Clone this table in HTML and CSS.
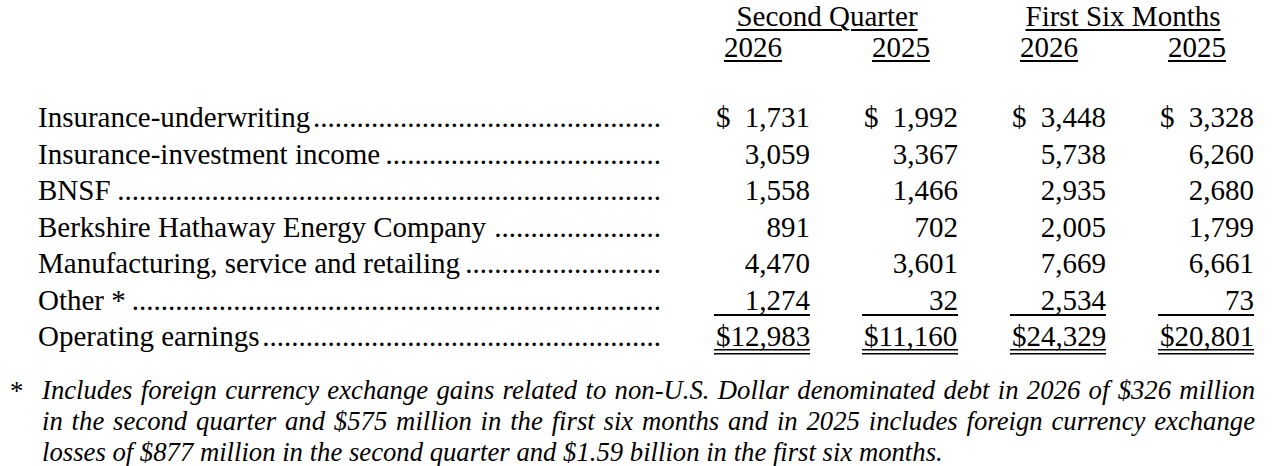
FILE: index.html
```html
<!DOCTYPE html>
<html>
<head>
<meta charset="utf-8">
<link rel="stylesheet" href="styles.css">
</head>
<body>
<div class="page">
  <div class="head">
    <div class="group g1"><span class="ul">Second Quarter</span></div>
    <div class="group g2"><span class="ul">First Six Months</span></div>
    <div class="spacer"></div>
    <div class="year"><span class="ul">2026</span></div>
    <div class="year"><span class="ul">2025</span></div>
    <div class="year"><span class="ul">2026</span></div>
    <div class="year"><span class="ul">2025</span></div>
  </div>
  <div class="table">
    <div class="label"><span class="name">Insurance-underwriting</span><span class="dots">................................................</span></div>
    <div class="cell"><span class="amt"><span>$</span><span>1,731</span></span></div>
    <div class="cell"><span class="amt"><span>$</span><span>1,992</span></span></div>
    <div class="cell"><span class="amt"><span>$</span><span>3,448</span></span></div>
    <div class="cell"><span class="amt"><span>$</span><span>3,328</span></span></div>

    <div class="label"><span class="name">Insurance-investment income</span><span class="dots">......................................</span></div>
    <div class="cell"><span class="amt">3,059</span></div>
    <div class="cell"><span class="amt">3,367</span></div>
    <div class="cell"><span class="amt">5,738</span></div>
    <div class="cell"><span class="amt">6,260</span></div>

    <div class="label"><span class="name">BNSF</span><span class="dots">...........................................................................</span></div>
    <div class="cell"><span class="amt">1,558</span></div>
    <div class="cell"><span class="amt">1,466</span></div>
    <div class="cell"><span class="amt">2,935</span></div>
    <div class="cell"><span class="amt">2,680</span></div>

    <div class="label"><span class="name">Berkshire Hathaway Energy Company</span><span class="dots">.......................</span></div>
    <div class="cell"><span class="amt">891</span></div>
    <div class="cell"><span class="amt">702</span></div>
    <div class="cell"><span class="amt">2,005</span></div>
    <div class="cell"><span class="amt">1,799</span></div>

    <div class="label"><span class="name">Manufacturing, service and retailing</span><span class="dots">...........................</span></div>
    <div class="cell"><span class="amt">4,470</span></div>
    <div class="cell"><span class="amt">3,601</span></div>
    <div class="cell"><span class="amt">7,669</span></div>
    <div class="cell"><span class="amt">6,661</span></div>

    <div class="label"><span class="name">Other *</span><span class="dots">.........................................................................</span></div>
    <div class="cell"><span class="amt single">1,274</span></div>
    <div class="cell"><span class="amt single">32</span></div>
    <div class="cell"><span class="amt single">2,534</span></div>
    <div class="cell"><span class="amt single">73</span></div>

    <div class="label"><span class="name">Operating earnings</span><span class="dots">.......................................................</span></div>
    <div class="cell"><span class="amt double"><span>$12,983</span></span></div>
    <div class="cell"><span class="amt double"><span>$11,160</span></span></div>
    <div class="cell"><span class="amt double"><span>$24,329</span></span></div>
    <div class="cell"><span class="amt double"><span>$20,801</span></span></div>
  </div>
  <div class="note">
    <span class="star">*</span>
    <p class="note-text"><span class="ln just">Includes foreign currency exchange gains related to non-U.S. Dollar denominated debt in 2026 of $326 million</span> <span class="ln just">in the second quarter and $575 million in the first six months and in 2025 includes foreign currency exchange</span> <span class="ln">losses of $877 million in the second quarter and $1.59 billion in the first six months.</span></p>
  </div>
</div>
</body>
</html>
```
FILE: styles.css
```css
html, body {
  margin: 0;
  padding: 0;
  background: #ffffff;
}
body {
  font-family: "Liberation Serif", "Times New Roman", serif;
  color: #000000;
  font-size: 29px;
}
.page {
  width: 1282px;
  height: 466px;
  overflow: hidden;
}
.head {
  display: grid;
  grid-template-columns: 662px repeat(4, 148px);
  padding-top: 1px;
  line-height: 31px;
}
.group {
  text-align: center;
  padding: 0 28px 0 62px;
}
.g1 { grid-column: 2 / 4; }
.g2 { grid-column: 4 / 6; }
.spacer { grid-column: 1; }
.year {
  text-align: right;
  padding-right: 28px;
}
.ul {
  text-decoration: underline;
  text-decoration-thickness: 2px;
  text-underline-offset: 3px;
}
.table {
  display: grid;
  grid-template-columns: 662px repeat(4, 148px);
  line-height: 36.5px;
  margin-top: 36px;
}
.label {
  display: flex;
  justify-content: space-between;
  padding-left: 38px;
  padding-right: 1px;
  white-space: nowrap;
}
.name,
.dots {
  flex: none;
}
.cell {
  display: flex;
  justify-content: flex-end;
}
.amt {
  width: 96px;
  display: flex;
  justify-content: space-between;
  padding-left: 2px;
  box-sizing: border-box;
}
.amt:not(:has(span)) {
  justify-content: flex-end;
}
.single {
  background: linear-gradient(#000, #000) no-repeat;
  background-size: 100% 2px;
  background-position: 0 32px;
}
.double {
  background:
    linear-gradient(#000, #000) no-repeat,
    linear-gradient(#000, #000) no-repeat;
  background-size: 100% 1.5px, 100% 1.5px;
  background-position: 0 31px, 0 35px;
}
.note {
  display: flex;
  margin-top: 20px;
  font-size: 26.7px;
  line-height: 31px;
}
.star {
  flex: none;
  width: 32px;
  padding-left: 10px;
  padding-top: 1px;
}
.note-text {
  margin: 0;
  width: 1213px;
  font-style: italic;
}
.ln {
  display: block;
  white-space: nowrap;
}
.ln.just {
  text-align: justify;
  text-align-last: justify;
  white-space: normal;
}
```
